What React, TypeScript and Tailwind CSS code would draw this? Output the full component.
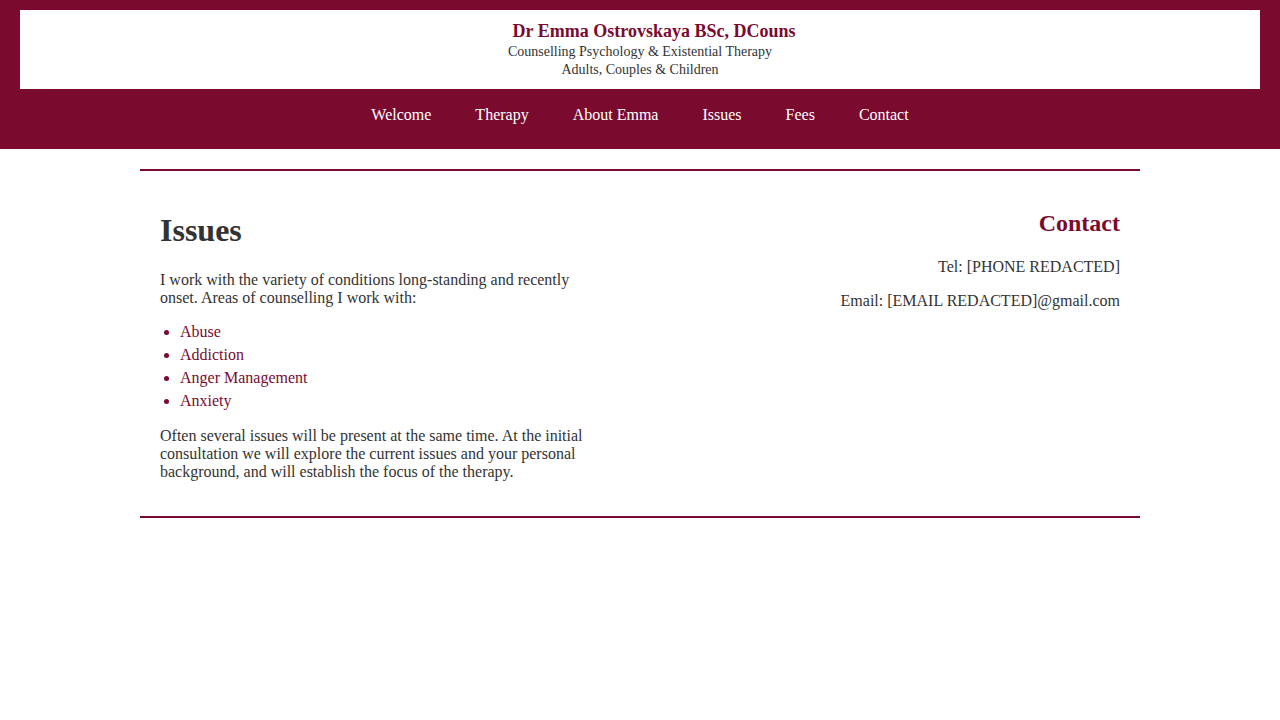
const navLinks = ['Welcome', 'Therapy', 'About Emma', 'Issues', 'Fees', 'Contact']

const issues = ['Abuse', 'Addiction', 'Anger Management', 'Anxiety']

export default function App() {
  return (
    <div className="min-h-[720px] bg-white text-[#333333] font-['Liberation_Serif',serif]">
      <header className="bg-[#7b0a2f] px-5 pt-[10px]">
        <div className="bg-white pt-[10px] pb-[10px] text-center">
          <h1 className="pl-[28px] text-[18px] leading-[23px] font-bold text-[#7b0a2f]">
            Dr Emma Ostrovskaya BSc, DCouns
          </h1>
          <p className="text-[14px] leading-[18px]">Counselling Psychology &amp; Existential Therapy</p>
          <p className="text-[14px] leading-[18px]">Adults, Couples &amp; Children</p>
        </div>
        <nav className="flex justify-center pt-[17px] pb-[25px]">
          {navLinks.map((link) => (
            <a key={link} href="#" className="px-[22px] text-base leading-[18px] text-white">
              {link}
            </a>
          ))}
        </nav>
      </header>

      <main className="mx-auto mt-5 w-[1000px] border-y-2 border-[#7b0a2f] px-5 pb-5">
        <div className="flex justify-between">
          <section className="w-[440px] pt-[41px]">
            <h2 className="text-[32px] leading-[37px] font-bold">Issues</h2>
            <p className="mt-[22px] text-base leading-[18px]">
              I work with the variety of conditions long-standing and recently onset. Areas of counselling I work with:
            </p>
            <ul className="mt-[13px] list-disc pl-5 text-base leading-[23px] text-[#7b0a2f]">
              {issues.map((item) => (
                <li key={item}>{item}</li>
              ))}
            </ul>
            <p className="mt-[15px] mb-[15px] text-base leading-[18px]">
              Often several issues will be present at the same time. At the initial consultation we will explore the
              current issues and your personal background, and will establish the focus of the therapy.
            </p>
          </section>

          <aside className="pt-[38px] text-right">
            <h2 className="text-2xl leading-[28px] font-bold text-[#7b0a2f]">Contact</h2>
            <p className="mt-[21px] text-base leading-[18px]">Tel: [PHONE REDACTED]</p>
            <p className="mt-4 text-base leading-[18px]">Email: [EMAIL REDACTED]@gmail.com</p>
          </aside>
        </div>
      </main>
    </div>
  )
}
